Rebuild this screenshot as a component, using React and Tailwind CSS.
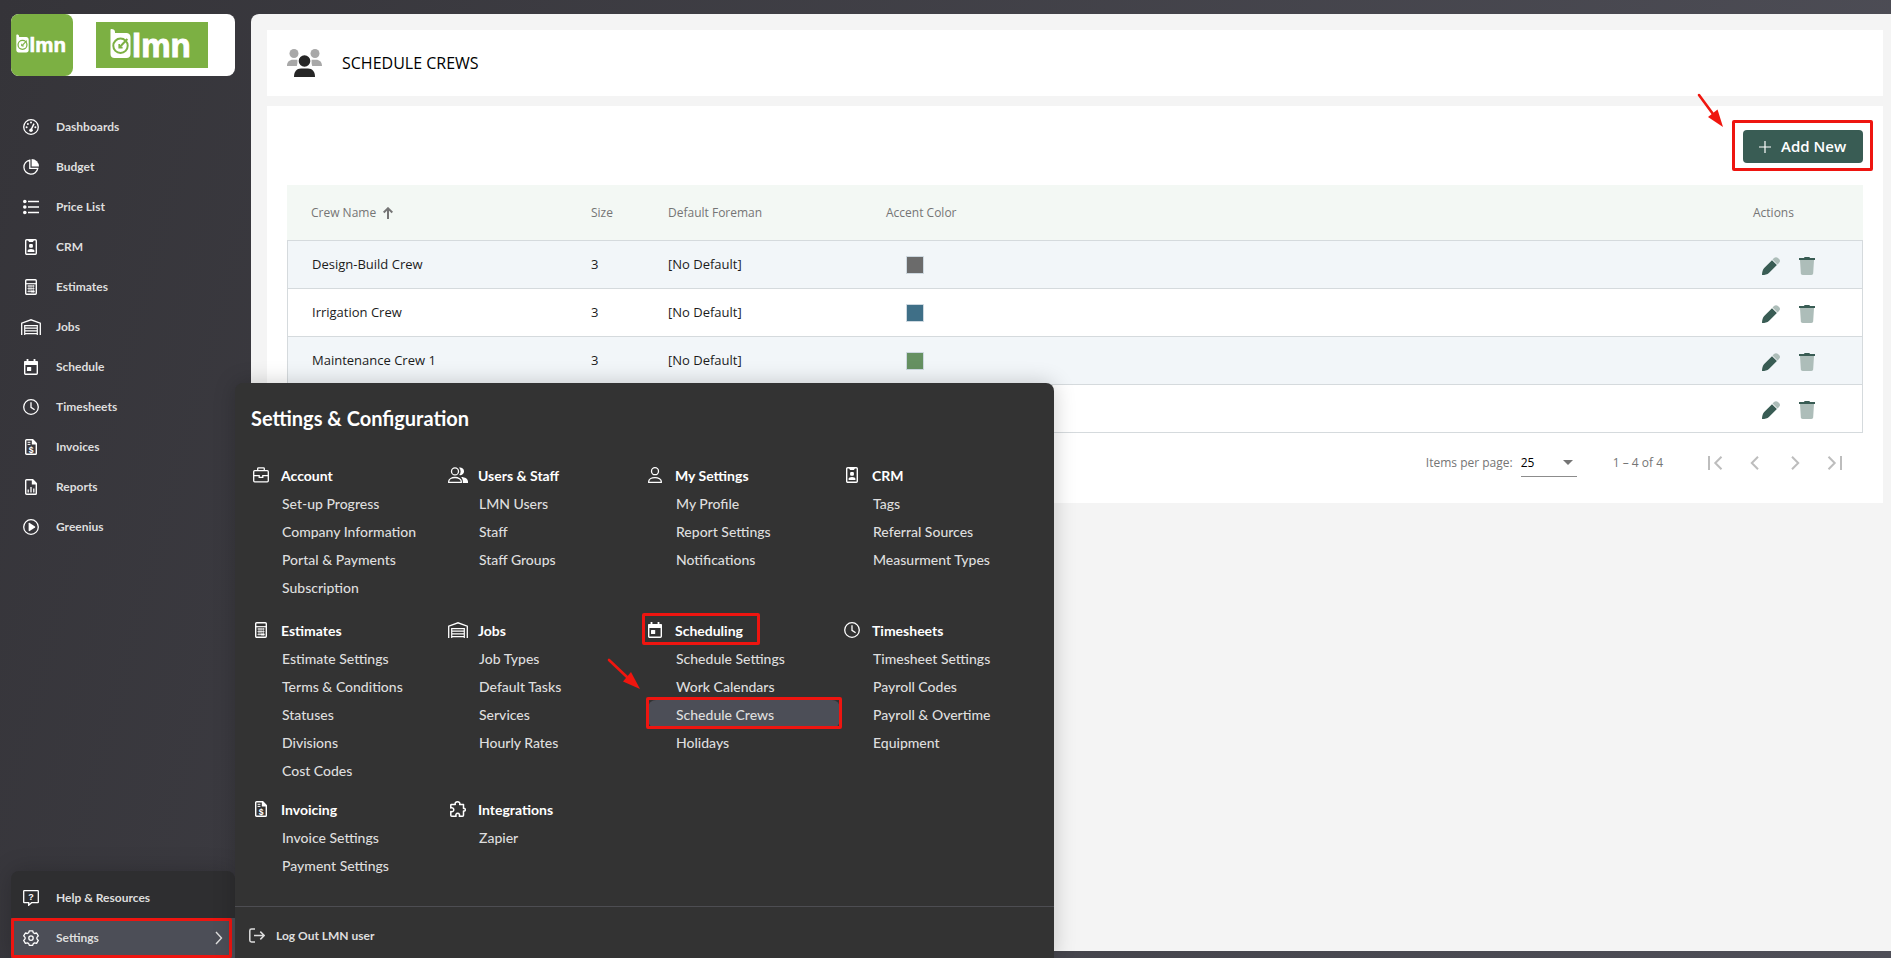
import React from 'react';

function Svg({ w = 16, h = 16, children, className = '' }) {
  return (
    <svg
      width={w}
      height={h}
      viewBox={`0 0 ${w} ${h}`}
      fill="none"
      stroke="currentColor"
      strokeWidth="1.3"
      className={`shrink-0 ${className}`}
      aria-hidden="true"
    >
      {children}
    </svg>
  );
}

const fill = { fill: 'currentColor', stroke: 'none' };

const GaugeIcon = () => (
  <Svg>
    <circle cx="8" cy="8" r="7.3" />
    <g {...fill}>
      <circle cx="3.6" cy="8.2" r="1" />
      <circle cx="4.9" cy="4.9" r="1" />
      <circle cx="8" cy="3.6" r="1" />
      <circle cx="12.4" cy="8.2" r="1" />
      <circle cx="8" cy="11.2" r="1.8" />
    </g>
    <path d="M8 11 11 4.6" strokeWidth="1.5" />
  </Svg>
);

const PieIcon = () => (
  <Svg>
    <path d="M6.8 1.2A7 7 0 1 0 14.8 9.4H6.8Z" />
    <path d="M8.600 0a7.400 7.400 0 0 1 7.400 7.400H8.600Z" {...fill} />
  </Svg>
);

const ListIcon = () => (
  <Svg>
    <g {...fill}>
      <circle cx="1.8" cy="2.5" r="1.8" />
      <circle cx="1.8" cy="8" r="1.8" />
      <circle cx="1.8" cy="13.5" r="1.8" />
    </g>
    <path d="M5 2.5h11M5 8h11M5 13.5h11" strokeWidth="1.6" />
  </Svg>
);

const BadgeIcon = () => (
  <Svg>
    <rect x="2.7" y=".7" width="10.6" height="14.6" rx="1" strokeWidth="1.4" />
    <path d="M5.2.5h5.6v1.2L9.8 3H6.2l-1-1.3Z" {...fill} />
    <rect x="6.1" y="5" width="3.8" height="3.8" rx="1" {...fill} />
    <path d="M4.6 13v-1.2c0-1.2 1.4-1.9 3.4-1.9s3.4.7 3.4 1.9V13Z" {...fill} />
  </Svg>
);

const CalculatorIcon = () => (
  <Svg>
    <rect x="2.7" y=".7" width="10.6" height="14.6" rx="1" strokeWidth="1.4" />
    <path d="M2.7 4.7h10.6" strokeWidth="1.2" />
    <path d="M4.5 7h7M4.5 9.6h7M4.5 12.4h7M6 6v7.4M8 6v7.4M10.2 6v7.4" strokeWidth=".8" />
    <path d="M8.2 11.6h3.3v1.8H8.2Z" {...fill} />
  </Svg>
);

const WarehouseIcon = () => (
  <Svg w={20}>
    <path d="M.7 16V4.2L10 .8l9.3 3.4V16" />
    <path d="M3.7 15.9V6.6h12.6v9.3M3.7 9.1h12.6M3.7 11.8h12.6M3.7 14.6h12.6" strokeWidth="1.2" />
  </Svg>
);

const CalendarIcon = () => (
  <Svg>
    <rect x="1.7" y="2.7" width="12.6" height="12.6" rx="1" strokeWidth="1.4" />
    <path d="M1 3.2C1 2.4 1.6 2 2.3 2h11.4c.7 0 1.3.4 1.3 1.2V6H1ZM3.6 0h1.8v3H3.6ZM10.6 0h1.8v3h-1.8Z" {...fill} />
    <rect x="4" y="8" width="4.2" height="4" rx=".5" {...fill} />
  </Svg>
);

const ClockIcon = () => (
  <Svg>
    <circle cx="8" cy="8" r="7.3" />
    <path d="M8 3.2v5.2l3.6 2.3" />
  </Svg>
);

const Sheet = ({ children }) => (
  <Svg>
    <path d="M3.6.7h6l3.7 3.8v9.9c0 .5-.4.9-.9.9H3.6c-.5 0-.9-.4-.9-.9V1.6c0-.5.4-.9.9-.9Z" strokeWidth="1.4" />
    <path d="M8.8.5h1.3L13.5 4v1.4H8.8Z" {...fill} />
    {children}
  </Svg>
);

const InvoiceIcon = () => (
  <Sheet>
    <path d="M4.6 3.3h2.8M4.6 5.4h2.8" strokeWidth="1" />
    <text x="8" y="13.8" textAnchor="middle" fontSize="8.5" fontWeight="700" fontFamily="Liberation Sans, sans-serif" {...fill}>$</text>
  </Sheet>
);

const ReportIcon = () => (
  <Sheet>
    <path d="M5.2 13.4v-3M8 13.4V8M10.8 13.4V9.6" strokeWidth="1.3" />
  </Sheet>
);

const PlayIcon = () => (
  <Svg>
    <circle cx="8" cy="8" r="7.3" />
    <path d="M5.600 4.500c0-.6.600-.9 1.100-.6l5.300 3.500c.4.300.4.900 0 1.200l-5.300 3.500c-.5.300-1.100 0-1.100-.6Z" {...fill} />
  </Svg>
);

const HelpIcon = () => (
  <Svg>
    <path d="M1.200.7h13.600c.3 0 .5.2.5.5v11c0 .3-.2.5-.5.5H8.600L5.700 15.200v-2.500H1.200c-.3 0-.5-.2-.5-.5v-11c0-.3.2-.5.5-.5Z" />
    <text x="8" y="10" textAnchor="middle" fontSize="9" fontWeight="700" fontFamily="Liberation Sans, sans-serif" {...fill}>?</text>
  </Svg>
);

const GearIcon = () => (
  <Svg>
    <path d="M6.300.8h3.400l.6 1.900 1.300.8 2-.5 1.700 2.900-1.400 1.500v1.500l1.400 1.500-1.700 2.900-2-.5-1.300.8-.6 1.700H6.300l-.6-1.700-1.300-.8-2 .5L.7 10.400l1.400-1.500V7.400L.7 5.900 2.400 3l2 .5 1.300-.8Z" strokeLinejoin="round" />
    <circle cx="8" cy="8.100" r="2.200" />
  </Svg>
);

const BriefcaseIcon = () => (
  <Svg>
    <rect x=".7" y="3.700" width="14.600" height="11.100" rx="1" />
    <path d="M4.700 3.700V1.600c0-.4.3-.8.800-.8h5c.5 0 .8.400.8.800v2.100M.7 8.600h5.300M10 8.600h5.300M6.200 8v2.300h3.600V8" />
  </Svg>
);

const UsersIcon = () => (
  <Svg w={20}>
    <circle cx="7" cy="4.400" r="3.500" />
    <path d="M.700 15.300v-.8c0-2.200 2.600-4 6.300-4s6.300 1.800 6.300 4v.8Z" />
    <path d="M11 .6a3.900 3.900 0 1 1 .2 7.500 5.400 5.400 0 0 0-.2-7.500ZM13.200 10c4 .1 6.800 2 6.800 4.600V16h-5.200c.2-2.300-.2-4.200-1.600-6Z" {...fill} />
  </Svg>
);

const UserIcon = () => (
  <Svg>
    <circle cx="8" cy="4.200" r="3.500" />
    <path d="M1.700 15.300v-.7c0-2.300 2.600-4 6.300-4s6.300 1.700 6.300 4v.7Z" />
  </Svg>
);

const PuzzleIcon = () => (
  <Svg>
    <path
      d="M1.400 3.500h3.900C4.700 1.700 5.900.8 7.500.8s2.800.9 2.200 2.700h3.800v3.900c1.100-.3 1.800.4 1.800 1.300s-.7 1.600-1.800 1.300v4.200c0 .6-.400 1-1 1H9.300c.7-1.600-.2-2.900-1.600-2.900s-2.300 1.300-1.600 2.900H1.800c-.6 0-1-.4-1-1v-3.700c1.700.6 3-.3 3-1.800S2.500 6.300.8 6.900V4.100c0-.3.2-.6.6-.6Z"
      strokeWidth="1.500"
      strokeLinejoin="round"
    />
  </Svg>
);

const LogoutIcon = () => (
  <Svg>
    <path d="M6 1H2.500C1.400 1 .800 1.600.800 2.700v9.600C.800 13.400 1.400 14 2.500 14H6M5 7.500h10M11.300 3.600l3.900 3.900-3.900 3.900" strokeWidth="1.500" />
  </Svg>
);

const CrewIcon = () => (
  <svg width="36" height="29" viewBox="0 0 36 29" className="shrink-0" aria-hidden="true">
    <g fill="#a8a8a8">
      <circle cx="7" cy="4.500" r="4.500" />
      <circle cx="28" cy="4.500" r="4.500" />
      <path d="M0 17c0-4 2.400-6.200 6-6.200h4.400v3.700l-.6 2.500ZM35 17c0-4-2.400-6.200-6-6.200h-4.400v3.700l.6 2.500Z" />
    </g>
    <circle cx="17.500" cy="12" r="5.800" fill="#262626" />
    <path d="M7 28c0-5.500 2.600-8.500 7-8.500h7c4.400 0 7 3 7 8.500Z" fill="#262626" />
  </svg>
);

const PencilIcon = () => (
  <svg width="18" height="18" viewBox="0 0 18 18" aria-hidden="true">
    <path d="M12 1.100a2.900 2.900 0 0 1 4 0l1 1a2.700 2.700 0 0 1 0 3.900l-1.500 1.400-5-4.900Z" fill="#adbdb9" />
    <path d="M10 3.200 14.900 8l-8 7.900c-1.500 1.400-4 2.100-6.900 2.100 0-2.900.8-5.600 2.200-7Z" fill="#395c54" />
  </svg>
);

const TrashIcon = () => (
  <svg width="16" height="18" viewBox="0 0 16 18" aria-hidden="true">
    <path d="M1 3h14l-.8 13.300c-.1 1-.8 1.700-1.800 1.700H3.600c-1 0-1.700-.7-1.800-1.700Z" fill="#adbdb9" />
    <path d="M0 1h5l.6-1h4.800l.6 1h5v2H0Z" fill="#395c54" />
  </svg>
);

function Logo({ className }) {
  return (
    <svg viewBox="0 -4 84 41" className={className} role="img" aria-label="lmn">
      <path d="M1.500 0C3.500 0 5 1 5 3v1h11.500c2 0 4 1.500 4 4v17c0 2.500-1.500 4-4 4H4.500c-2.500 0-4-1.500-4-4V1c0-.6.400-1 1-1Z" fill="#fff" />
      <circle cx="10.500" cy="16.800" r="7.200" fill="none" stroke="#7cb043" strokeWidth="2" />
      <path d="M9.200 15v3.600h3.400" fill="none" stroke="#7cb043" strokeWidth="1.600" />
      <path d="m9.800 18 7.600-8" fill="none" stroke="#7cb043" strokeWidth="2" />
      <text x="22" y="28" fontFamily="Liberation Sans, Arial, sans-serif" fontWeight="700" fontSize="33" fill="#fff" stroke="#fff" strokeWidth="1">lmn</text>
    </svg>
  );
}

function Arrow({ className, d, head, w, h }) {
  return (
    <svg width={w} height={h} viewBox={`0 0 ${w} ${h}`} className={`pointer-events-none absolute ${className}`} aria-hidden="true">
      <path d={d} stroke="#f0160f" strokeWidth="2.600" strokeLinecap="round" />
      <path d={head} fill="#f0160f" />
    </svg>
  );
}

const Outline = ({ className }) => (
  <span className={`pointer-events-none absolute rounded-[2px] border-[3px] border-[#ee1510] ${className}`} />
);

const nav = [
  ['Dashboards', GaugeIcon],
  ['Budget', PieIcon],
  ['Price List', ListIcon],
  ['CRM', BadgeIcon],
  ['Estimates', CalculatorIcon],
  ['Jobs', WarehouseIcon],
  ['Schedule', CalendarIcon],
  ['Timesheets', ClockIcon],
  ['Invoices', InvoiceIcon],
  ['Reports', ReportIcon],
  ['Greenius', PlayIcon],
];

const groups = [
  ['Account', BriefcaseIcon, ['Set-up Progress', 'Company Information', 'Portal & Payments', 'Subscription']],
  ['Users & Staff', UsersIcon, ['LMN Users', 'Staff', 'Staff Groups']],
  ['My Settings', UserIcon, ['My Profile', 'Report Settings', 'Notifications']],
  ['CRM', BadgeIcon, ['Tags', 'Referral Sources', 'Measurment Types']],
  ['Estimates', CalculatorIcon, ['Estimate Settings', 'Terms & Conditions', 'Statuses', 'Divisions', 'Cost Codes']],
  ['Jobs', WarehouseIcon, ['Job Types', 'Default Tasks', 'Services', 'Hourly Rates']],
  ['Scheduling', CalendarIcon, ['Schedule Settings', 'Work Calendars', 'Schedule Crews', 'Holidays']],
  ['Timesheets', ClockIcon, ['Timesheet Settings', 'Payroll Codes', 'Payroll & Overtime', 'Equipment']],
  ['Invoicing', InvoiceIcon, ['Invoice Settings', 'Payment Settings']],
  ['Integrations', PuzzleIcon, ['Zapier']],
];

const crews = [
  { name: 'Design-Build Crew', size: '3', foreman: '[No Default]', color: 'bg-[#6b6b6b]' },
  { name: 'Irrigation Crew', size: '3', foreman: '[No Default]', color: 'bg-[#3f6f87]' },
  { name: 'Maintenance Crew 1', size: '3', foreman: '[No Default]', color: 'bg-[#669162]' },
  { name: '', size: '', foreman: '', color: '' },
];

function NavLink({ label, Icon, children, className = '' }) {
  return (
    <a href="#" className={`relative flex h-10 items-center gap-[15px] pl-[10px] text-[12px] font-bold text-[#dedede] ${className}`}>
      <span className="flex w-5 justify-center text-white">
        <Icon />
      </span>
      <span className="flex-1">{label}</span>
      {children}
    </a>
  );
}

function Sidebar() {
  return (
    <aside className="flex w-[235px] shrink-0 flex-col pl-[11px] pt-[14px]">
      <a href="#" className="flex h-[62px] items-center gap-[23px] rounded-[8px] bg-white">
        <span className="flex size-[62px] items-center justify-center rounded-[8px] bg-[#7cb043]">
          <Logo className="w-[52px]" />
        </span>
        <span className="flex h-[46px] w-[112px] items-center justify-center bg-[#7cb043]">
          <Logo className="w-[84px]" />
        </span>
      </a>
      <nav className="mt-[31px]">
        {nav.map(([label, Icon]) => (
          <NavLink key={label} label={label} Icon={Icon} />
        ))}
      </nav>
      <div className="mt-auto rounded-t-[8px] bg-[#2e2e30] pt-[7px] shadow-[0_0_24px_rgba(0,0,0,0.2)]">
        <NavLink label="Help & Resources" Icon={HelpIcon} />
        <NavLink label="Settings" Icon={GearIcon} className="bg-[#4c4e57]">
          <svg width="8" height="14" viewBox="0 0 8 14" className="mr-[12px]" fill="none" stroke="currentColor" strokeWidth="1.400" aria-hidden="true">
            <path d="m1 1 5.500 6L1 13" />
          </svg>
          <Outline className="inset-y-0 left-0 right-[3px]" />
        </NavLink>
      </div>
    </aside>
  );
}

function MenuGroup({ title, Icon, items }) {
  const marked = title === 'Scheduling';
  return (
    <section className="relative pb-[11px]">
      <h3 className="flex h-7 items-center gap-[10px] text-[14px] font-bold text-white">
        <span className="flex w-5 justify-center">
          <Icon />
        </span>
        {title}
      </h3>
      <ul>
        {items.map((item) => (
          <li key={item} className="relative pl-[3px]">
            <a
              href="#"
              className={`flex h-7 items-center rounded-[8px] pl-[28px] text-[14px] font-medium text-[#dedede] ${
                item === 'Schedule Crews' ? 'bg-[#4c4e57]' : ''
              }`}
            >
              {item}
            </a>
            {item === 'Schedule Crews' && <Outline className="-top-[3px] left-[1px] -right-[2px] h-8" />}
          </li>
        ))}
      </ul>
      {marked && <Outline className="-top-[3px] -left-[3px] h-8 w-[118px]" />}
      {marked && (
        <Arrow
          className="-left-[38px] top-[42px]"
          w={34}
          h={32}
          d="M2 2 20 19"
          head="M33 31 16 23.500 24 14Z"
        />
      )}
    </section>
  );
}

function SettingsMenu() {
  return (
    <section className="absolute bottom-0 left-[235px] w-[819px] rounded-t-[8px] bg-[#333333] pt-[18px] shadow-[0_0_22px_rgba(0,0,0,0.2)]">
      <h2 className="pl-4 text-[20px] leading-[34px] font-bold text-white">Settings &amp; Configuration</h2>
      <div className="mt-[26px] grid grid-cols-4 grid-rows-[155px_auto_auto] gap-x-[2px] pr-[17px] pl-4">
        {groups.map(([title, Icon, items]) => (
          <MenuGroup key={title} title={title} Icon={Icon} items={items} />
        ))}
      </div>
      <footer className="mt-4 border-t border-[#4d4d52] pt-[14px] pb-[7px]">
        <a href="#" className="ml-[14px] flex h-[30px] items-center gap-[11px] text-[12px] font-bold text-[#dedede]">
          <LogoutIcon />
          Log Out LMN user
        </a>
      </footer>
    </section>
  );
}

const head = 'h-[55px] p-0 text-left text-[12px] font-normal text-[#757575]';

function CrewTable() {
  return (
    <table className="w-full table-fixed border-separate border-spacing-0 text-[13px] text-[#1c1c1c]">
      <colgroup>
        <col className="w-[304px]" />
        <col className="w-[77px]" />
        <col className="w-[218px]" />
        <col />
        <col className="w-[110px]" />
      </colgroup>
      <thead className="bg-[#f3f8f4]">
        <tr>
          <th className={`${head} pl-6!`}>
            <button type="button" className="flex items-center gap-[7px]">
              Crew Name
              <svg width="10" height="12" viewBox="0 0 10 12" fill="none" stroke="#757575" strokeWidth="2" aria-hidden="true">
                <path d="M5 12V1.500M.700 5.500 5 1.300l4.300 4.200" />
              </svg>
            </button>
          </th>
          <th className={head}>Size</th>
          <th className={head}>Default Foreman</th>
          <th className={head}>Accent Color</th>
          <th className={head}>Actions</th>
        </tr>
      </thead>
      <tbody className="[&_td]:h-12 [&_td]:border-t [&_td]:border-[#d5dadd] [&_td]:p-0 [&_tr:last-child_td]:border-b [&_tr:last-child_td]:h-[49px] [&_tr:nth-child(odd)]:bg-[#f2f6f9]">
        {crews.map((c, i) => (
          <tr key={i}>
            <td className="border-l pl-6!">{c.name}</td>
            <td>{c.size}</td>
            <td>{c.foreman}</td>
            <td>{c.color && <span className={`ml-5 block size-[18px] rounded-[1px] border border-[#cdd8e0] ${c.color}`} />}</td>
            <td className="border-r">
              <div className="flex items-center gap-[19px] pt-[2px] pl-[9px]">
                <button type="button" aria-label="Edit crew">
                  <PencilIcon />
                </button>
                <button type="button" aria-label="Delete crew">
                  <TrashIcon />
                </button>
              </div>
            </td>
          </tr>
        ))}
      </tbody>
    </table>
  );
}

const pageButtons = [
  ['First page', 'M2 1v14M14.500 1.800 8.300 8l6.200 6.200'],
  ['Previous page', 'M11 1.800 4.800 8l6.200 6.200'],
  ['Next page', 'm5 1.800 6.200 6.200L5 14.200'],
  ['Last page', 'M14 1v14M1.500 1.800 7.700 8l-6.200 6.200'],
];

function Paginator() {
  return (
    <div className="flex items-center justify-end pr-5 text-[12px] text-[#757575]">
      <label htmlFor="page-size">Items per page:</label>
      <span className="relative ml-2 flex h-7 w-14 items-center border-b border-[#8c8c8c]">
        <select id="page-size" defaultValue="25" className="w-full appearance-none bg-transparent text-black">
          <option>25</option>
        </select>
        <svg width="10" height="5" viewBox="0 0 10 5" className="pointer-events-none absolute right-1" aria-hidden="true">
          <path d="M0 0h10L5 5Z" fill="#757575" />
        </svg>
      </span>
      <span className="ml-9">1 – 4 of 4</span>
      <span className="ml-11 flex gap-6">
        {pageButtons.map(([label, d]) => (
          <button key={label} type="button" aria-label={label}>
            <svg width="16" height="16" viewBox="0 0 16 16" fill="none" stroke="#bdbdbd" strokeWidth="2" aria-hidden="true">
              <path d={d} />
            </svg>
          </button>
        ))}
      </span>
    </div>
  );
}

export default function App() {
  return (
    <div className="relative flex h-screen overflow-hidden bg-linear-[105deg] from-[#353439] to-[#4f4f58] font-['Lato',sans-serif]">
      <Sidebar />
      <main className="mt-[14px] mb-[7px] ml-4 flex-1 rounded-tl-[8px] bg-[#f4f4f4] py-4 pr-2 pl-4 font-['Open_Sans',sans-serif]">
        <header className="flex h-[66px] items-center gap-[19px] bg-white pl-5">
          <CrewIcon />
          <h1 className="text-[16px] font-medium text-black">SCHEDULE CREWS</h1>
        </header>
        <section className="mt-[10px] bg-white px-5 pt-6 pb-[26px]">
          <div className="flex justify-end">
            <div className="relative">
              <button type="button" className="flex h-[33px] w-[120px] items-center gap-[10px] rounded-[4px] bg-[#395c54] pl-4 text-[15px] font-semibold text-white">
                <svg width="12" height="12" viewBox="0 0 12 12" stroke="#fff" strokeWidth="1.200" aria-hidden="true">
                  <path d="M6 0v12M0 6h12" />
                </svg>
                Add New
              </button>
              <Outline className="-top-[10px] -right-[10px] -bottom-[8px] -left-[11px]" />
              <Arrow className="-top-[37px] -left-[46px]" w={28} h={36} d="M2 2 16 21" head="M26 34 11 24 20.500 16.500Z" />
            </div>
          </div>
          <div className="mt-[22px]">
            <CrewTable />
          </div>
          <div className="mt-4">
            <Paginator />
          </div>
        </section>
      </main>
      <SettingsMenu />
    </div>
  );
}
